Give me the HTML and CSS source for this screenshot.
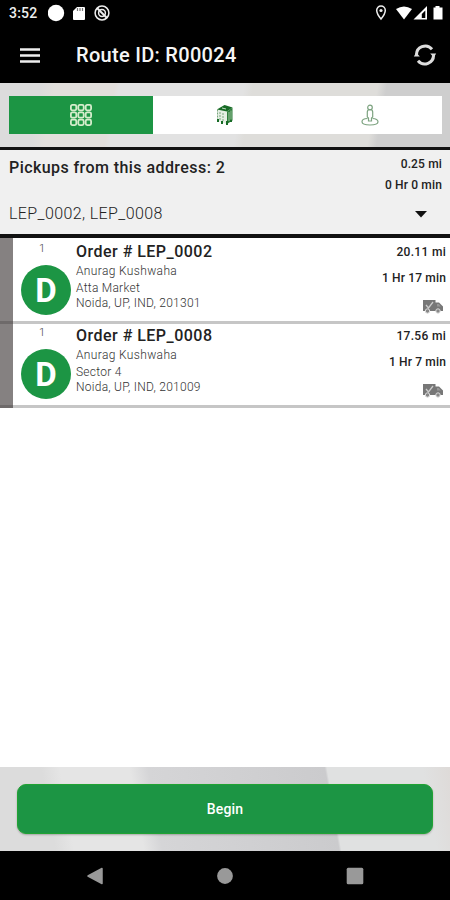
FILE: index.html
```html
<!DOCTYPE html>
<html lang="en">
<head>
  <meta charset="UTF-8" />
  <meta name="viewport" content="width=device-width, initial-scale=1.0"/>
  <title>Route R00024</title>
  <link rel="stylesheet" href="styles.css">
</head>
<body>

  <div class="status-bar">
    <span class="time">3:52</span>
    <svg class="status-left" width="62" height="18" viewBox="0 0 62 18">
      <circle cx="8" cy="9" r="8.200" fill="#fff"/>
      <path d="M29 3h7q1 0 1 1v11q0 1-1 1H26q-1 0-1-1V7z" fill="#fff"/>
      <path d="M29.500 4v3M32 4v3M34.500 4v3" stroke="#777" stroke-width="1.200"/>
      <g fill="none" stroke="#eee" stroke-width="1.500">
        <circle cx="54" cy="9" r="6.900"/>
        <circle cx="54" cy="9" r="3.400"/>
        <path d="M49 4l10 10" stroke-width="2"/>
      </g>
    </svg>
    <svg class="status-right" width="68" height="18" viewBox="0 0 68 18">
      <path d="M6 2a4.300 4.300 0 0 0-4.300 4.300C1.700 10 6 15 6 15s4.300-5 4.300-8.700A4.300 4.300 0 0 0 6 2z" fill="none" stroke="#eee" stroke-width="1.500"/>
      <circle cx="6" cy="6.500" r="1.600" fill="#eee"/>
      <path d="M21 5q8-5 16 0l-8 10.500z" fill="#fff"/>
      <path d="M52 2v13.500H38.500z" fill="#fff"/>
      <path d="M50.300 6.500v7.500h-3.500V10z" fill="#000"/>
      <path d="M60.500 2h4v1.500h3V15.500h-9V3.500h2z" fill="#fff"/>
    </svg>
  </div>

  <header class="app-bar">
    <svg class="menu" width="20" height="15" viewBox="0 0 20 15">
      <path d="M0 1.500h20M0 7.500h20M0 13.500h20" stroke="#eee" stroke-width="2.600"/>
    </svg>
    <h1>Route ID: R00024</h1>
    <svg class="refresh" width="24" height="24" viewBox="0 0 24 24">
      <g fill="none" stroke="#ddd" stroke-width="3">
        <path d="M3.500 12.500A8.800 8.800 0 0 1 19 6.200"/>
        <path d="M20.500 11.500A8.800 8.800 0 0 1 5 17.800"/>
      </g>
      <path d="M.8 13.500h6L3.300 9.500zM23.200 10.500h-6L20.700 14.500z" fill="#ddd"/>
    </svg>
  </header>

  <div class="tabs-wrap">
    <nav class="tabs">
      <div class="tab active">
        <svg width="24" height="24" viewBox="0 0 24 24" fill="none" stroke="#d5edcc" stroke-width="1.800">
          <rect x="1.900" y="1.900" width="5.400" height="5.400" rx="1.500"/>
          <rect x="9.300" y="1.900" width="5.400" height="5.400" rx="1.500"/>
          <rect x="16.700" y="1.900" width="5.400" height="5.400" rx="1.500"/>
          <rect x="1.900" y="9.300" width="5.400" height="5.400" rx="1.500"/>
          <rect x="9.300" y="9.300" width="5.400" height="5.400" rx="1.500"/>
          <rect x="16.700" y="9.300" width="5.400" height="5.400" rx="1.500"/>
          <rect x="1.900" y="16.700" width="5.400" height="5.400" rx="1.500"/>
          <rect x="9.300" y="16.700" width="5.400" height="5.400" rx="1.500"/>
          <rect x="16.700" y="16.700" width="5.400" height="5.400" rx="1.500"/>
        </svg>
      </div>
      <div class="tab">
        <svg width="20" height="24" viewBox="0 0 20 24">
          <path d="M2 6l8-4 7 2.500v13l-5.500 3.500L3 18z" fill="#e4eee3"/>
          <path d="M2 6.500L9.500 2l8 2.500L12 8.500z" fill="#176b26"/>
          <path d="M12 8.500l5.500-4v13L12 21z" fill="#2d7d3a"/>
          <path d="M14 9v9M16 7.500v9" stroke="#b8d6b8" stroke-width=".8"/>
          <path d="M2.500 6.500V18M5 9v8M8 10v8" stroke="#7ba77e" stroke-width="1" stroke-dasharray="2 1"/>
          <path d="M7 5l4 1" stroke="#c5dec4"/>
          <path d="M3 16v3M7 18v3M12 18v4M16 17v2" stroke="#176b26" stroke-width="2"/>
        </svg>
      </div>
      <div class="tab">
        <svg width="20" height="24" viewBox="0 0 20 24" fill="none" stroke="#7da380" stroke-width="1.200">
          <circle cx="10" cy="4.500" r="2.300"/>
          <path d="M7.300 14V9q0-2.500 2.700-2.500T12.700 9v5l-1.200 1v3h-3v-3z"/>
          <path d="M7.500 15.500C4 15.500 2 17 2 18.800S4.500 22 10 22s8-1.400 8-3.200-2-3.300-5.500-3.300"/>
        </svg>
      </div>
    </nav>
  </div>

  <section class="pickup">
    <div class="pickup-info">
      <h2>Pickups from this address: 2</h2>
      <p>LEP_0002, LEP_0008</p>
    </div>
    <div class="pickup-stats">
      <span class="distance">0.25 mi</span>
      <span class="duration">0 Hr 0 min</span>
      <svg width="12" height="7" viewBox="0 0 12 7"><path d="M0 0h12L6 6.500z" fill="#111"/></svg>
    </div>
  </section>

  <main>
    <article class="order">
      <div class="marker">
        <span class="stop">1</span>
        <span class="badge">D</span>
      </div>
      <div class="details">
        <h3>Order # LEP_0002</h3>
        <p class="customer">Anurag Kushwaha</p>
        <p>Atta Market</p>
        <p>Noida, UP, IND, 201301</p>
      </div>
      <div class="stats">
        <span class="distance">20.11 mi</span>
        <span class="duration">1 Hr 17 min</span>
        <svg width="21" height="15" viewBox="0 0 21 15">
          <path d="M0 1h12.500v2.500h3.500l4 4V12h-20z" fill="#777"/>
          <path d="M3 6l2.500 3L10 3" fill="none" stroke="#ccc" stroke-width="1.300"/>
          <path d="M14 5h1.800l2 2.500H14z" fill="#999"/>
          <circle cx="4.500" cy="12" r="2.200" fill="#888" stroke="#ddd"/>
          <circle cx="15" cy="12" r="2.200" fill="#888" stroke="#ddd"/>
        </svg>
      </div>
    </article>

    <article class="order">
      <div class="marker">
        <span class="stop">1</span>
        <span class="badge">D</span>
      </div>
      <div class="details">
        <h3>Order # LEP_0008</h3>
        <p class="customer">Anurag Kushwaha</p>
        <p>Sector 4</p>
        <p>Noida, UP, IND, 201009</p>
      </div>
      <div class="stats">
        <span class="distance">17.56 mi</span>
        <span class="duration">1 Hr 7 min</span>
        <svg width="21" height="15" viewBox="0 0 21 15">
          <path d="M0 1h12.500v2.500h3.500l4 4V12h-20z" fill="#777"/>
          <path d="M3 6l2.500 3L10 3" fill="none" stroke="#ccc" stroke-width="1.300"/>
          <path d="M14 5h1.800l2 2.500H14z" fill="#999"/>
          <circle cx="4.500" cy="12" r="2.200" fill="#888" stroke="#ddd"/>
          <circle cx="15" cy="12" r="2.200" fill="#888" stroke="#ddd"/>
        </svg>
      </div>
    </article>
  </main>

  <footer>
    <button type="button">Begin</button>
  </footer>

  <div class="nav-bar">
    <svg width="18" height="18" viewBox="0 0 18 18"><path d="M16 1.500v15L2 9z" fill="#999" stroke="#999" stroke-width="1.500" stroke-linejoin="round"/></svg>
    <svg width="18" height="18" viewBox="0 0 18 18"><circle cx="9" cy="9" r="7.900" fill="#999"/></svg>
    <svg width="18" height="18" viewBox="0 0 18 18"><rect x=".7" y=".7" width="16.600" height="16.600" rx="1.500" fill="#999"/></svg>
  </div>

</body>
</html>
```

FILE: styles.css
```css
* {
  box-sizing: border-box;
}
body {
  font-family: Roboto, sans-serif;
  margin: 0;
  height: 900px;
  display: flex;
  flex-direction: column;
  background-color: #fff;
  color: #222;
  overflow: hidden;
}
h1, h2, h3, p {
  margin: 0;
}
svg {
  display: block;
  flex: none;
}

.status-bar {
  display: flex;
  height: 27px;
  padding: 4px 7px 0 9px;
  background-color: #000;
  color: #eee;
}
.time {
  width: 39px;
  font-size: 14px;
  font-weight: 500;
  line-height: 19px;
  letter-spacing: 0.2px;
}
.status-right {
  margin-left: auto;
}

.app-bar {
  display: flex;
  align-items: center;
  height: 56px;
  padding: 0 13px 0 20px;
  background-color: #000;
}
.app-bar h1 {
  margin-left: 36px;
  font-size: 20px;
  font-weight: 500;
  letter-spacing: 0.3px;
  color: #f5f5f5;
}
.refresh {
  margin-left: auto;
}

.tabs-wrap {
  height: 64px;
  padding: 13px 8px 0 9px;
  background: linear-gradient(100deg, #dcdcdc 0 9%, #e2dfdc 12% 25%, #e2e2e2 26% 53%, #deddda 55% 82%, #cecece 84%);
}
.tabs {
  display: grid;
  grid-template-columns: repeat(3, 1fr);
  height: 38px;
  background-color: #fff;
}
.tab {
  display: flex;
  align-items: center;
  justify-content: center;
}
.tab.active {
  background-color: #1c9544;
}

.pickup {
  display: flex;
  justify-content: space-between;
  height: 91px;
  padding: 0 8px 0 9px;
  background-color: #f0f0f0;
  border-top: 3px solid #111;
  border-bottom: 4px solid #111;
}
.pickup h2 {
  margin-top: 8px;
  font-size: 16px;
  font-weight: 500;
  line-height: 20px;
  letter-spacing: 0.43px;
}
.pickup p {
  margin-top: 26px;
  font-size: 16px;
  font-weight: 300;
  line-height: 20px;
  letter-spacing: 0.4px;
}
.pickup-stats,
.stats {
  display: flex;
  flex-direction: column;
  align-items: flex-end;
  font-size: 12px;
  font-weight: 500;
  line-height: 16px;
  letter-spacing: 0.15px;
}
.pickup-stats .distance {
  margin-top: 6px;
}
.pickup-stats .duration {
  margin-top: 5px;
}
.pickup-stats svg {
  margin: 18px 15px 0 0;
}

main {
  flex: 1;
}
.order {
  display: flex;
  height: 84px;
  padding: 0 4px 3px 13px;
  background:
    linear-gradient(to right, #6e6a6a 13px, #c6c6c6 13px) bottom / 100% 3px no-repeat,
    linear-gradient(to right, #858181 13px, #fff 13px);
}
.order:first-child {
  height: 86px;
  padding-top: 2px;
}
.marker {
  display: flex;
  flex-direction: column;
  align-items: center;
  width: 63px;
  padding-left: 3px;
}
.stop {
  margin: 2px 8px 0 0;
  font-size: 11px;
  font-weight: 300;
  line-height: 14px;
  color: #444;
}
.badge {
  width: 50px;
  height: 50px;
  margin-top: 9px;
  border-radius: 50%;
  background-color: #1c9544;
  color: #fff;
  font-size: 33px;
  font-weight: 700;
  line-height: 51px;
  text-align: center;
}
.details {
  flex: 1;
}
.details h3 {
  margin: 2px 0 2px;
  font-size: 16px;
  font-weight: 500;
  line-height: 20px;
  letter-spacing: 0.48px;
}
.details p {
  font-size: 12px;
  font-weight: 300;
  line-height: 15px;
  letter-spacing: 0.26px;
  color: #333;
}
.details .customer {
  margin-bottom: 2px;
  letter-spacing: 0.36px;
}
.stats .distance {
  margin-top: 4px;
}
.order .distance {
  letter-spacing: 0.3px;
}
.stats .duration {
  margin-top: 10px;
}
.stats svg {
  margin: 13px 2px 0 0;
}

footer {
  height: 84px;
  padding: 17px 17px 0;
  background: linear-gradient(80deg, #dcdcdc 0 12%, #e5e5e5 16% 31%, #d5d5d7 35%, #cbcbcd 73%, #e0e1e1 73.500% 94%, #dedad8);
}
button {
  display: block;
  width: 100%;
  height: 50px;
  border: 1px solid #20a333;
  border-radius: 9px;
  background-color: #1c9544;
  box-shadow: 0 1px 2px rgba(0, 0, 0, 0.25);
  color: #fff;
  font-family: Roboto, sans-serif;
  font-size: 14px;
  font-weight: 500;
  letter-spacing: 0.2px;
}

.nav-bar {
  display: flex;
  align-items: center;
  justify-content: space-between;
  height: 49px;
  padding: 0 86px;
  background-color: #000;
}
```
